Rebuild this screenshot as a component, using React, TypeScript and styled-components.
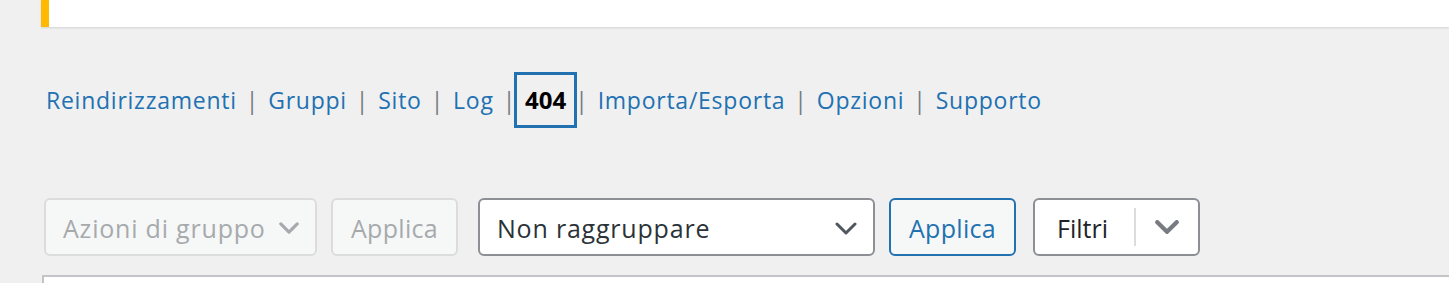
import React from 'react';
import styled, { createGlobalStyle } from 'styled-components';

const colors = {
  page: '#f0f0f1',
  blue: '#2271b1',
  text: '#1d2327',
  muted: '#a7aaad',
  sep: '#787c82',
  border: '#8c8f94',
  light: '#dcdcde',
  warning: '#ffb900',
};

const GlobalStyle = createGlobalStyle`
html, body {
  margin: 0;
  padding: 0;
  background: ${colors.page};
  font-family: "Open Sans", "Noto Sans", sans-serif;
  overflow: hidden;
}`;

const Wrap = styled.div`
padding-left: 42px;
width: 1449px;
box-sizing: border-box;`;

const Notice = styled.div`
height: 27px;
margin-left: -1px;
background: #fff;
border-left: 8px solid ${colors.warning};
box-shadow: 0 1px 2px rgba(0, 0, 0, 0.12);`;

const Nav = styled.ul`
list-style: none;
display: flex;
align-items: center;
margin: 51px 0 0;
padding: 0 0 0 4px;
height: 44px;
font-size: 23px;
letter-spacing: 0.75px;`;

const Item = styled.li`
display: flex;
align-items: center;
color: ${colors.sep};`;

const Link = styled.a`
color: ${colors.blue};
text-decoration: none;`;

const Current = styled.strong`
color: #000;
font-size: 24px;
font-weight: 700;
letter-spacing: 0;
line-height: 34px;
outline: 3px solid ${colors.blue};
outline-offset: 8px;`;

const Sep = styled.span`
padding: 0 9px;`;

const Toolbar = styled.div`
display: flex;
align-items: center;
margin-top: 76px;
margin-left: 2px;
font-size: 25px;
letter-spacing: 0.8px;`;

const Group = styled.div<{ $space: number }>`
display: flex;
gap: 14px;
margin-right: ${(p) => p.$space}px;`;

const Select = styled.div<{ $width: number; $disabled?: boolean }>`
box-sizing: border-box;
width: ${(p) => p.$width}px;
height: 58px;
display: flex;
align-items: center;
justify-content: space-between;
padding: 2px 16px 0 17px;
border-radius: 6px;
border: 2px solid ${(p) => (p.$disabled ? colors.light : colors.border)};
background: ${(p) => (p.$disabled ? '#f6f7f7' : '#fff')};
color: ${(p) => (p.$disabled ? colors.muted : '#2c3338')};`;

const Button = styled.div<{ $disabled?: boolean }>`
box-sizing: border-box;
width: 127px;
height: 58px;
display: flex;
align-items: center;
justify-content: center;
padding-top: 2px;
border-radius: 6px;
letter-spacing: 0.3px;
background: #f6f7f7;
border: 2px solid ${(p) => (p.$disabled ? colors.light : colors.blue)};
color: ${(p) => (p.$disabled ? colors.muted : colors.blue)};`;

const Split = styled.div`
box-sizing: border-box;
width: 167px;
height: 58px;
display: flex;
align-items: center;
border-radius: 6px;
border: 2px solid ${colors.border};
background: #fff;
letter-spacing: 0;
color: ${colors.text};`;

const SplitLabel = styled.span`
flex: 1;
padding: 2px 0 0 22px;`;

const SplitToggle = styled.span`
display: flex;
align-items: center;
justify-content: center;
width: 62px;
height: 38px;
border-left: 2px solid ${colors.light};`;

const Table = styled.div`
margin-top: 19px;
height: 6px;
background: #fff;
border: 2px solid #c3c4c7;
border-right: none;
border-bottom: none;`;

const Chevron = ({ color, width = 22, stroke = 3 }: { color: string; width?: number; stroke?: number }) => (
  <svg width={width} height={width / 2 + 2} viewBox="0 0 22 13" fill="none">
    <path d="M2 2 L11 11 L20 2" stroke={color} strokeWidth={stroke} strokeLinecap="round" strokeLinejoin="round" />
  </svg>
);

const items = [
  'Reindirizzamenti',
  'Gruppi',
  'Sito',
  'Log',
  '404',
  'Importa/Esporta',
  'Opzioni',
  'Supporto',
];

const App = () => (
  <>
    <GlobalStyle />
    <Wrap>
      <Notice />
      <Nav>
        {items.map((label, i) => (
          <Item key={label}>
            {label === '404' ? <Current>{label}</Current> : <Link href="#">{label}</Link>}
            {i < items.length - 1 ? <Sep>|</Sep> : null}
          </Item>
        ))}
      </Nav>
      <Toolbar>
        <Group $space={20}>
          <Select $width={273} $disabled>
            Azioni di gruppo
            <Chevron color="#a7aaad" width={20} stroke={3.5} />
          </Select>
          <Button $disabled>Applica</Button>
        </Group>
        <Group $space={17}>
          <Select $width={397}>
            Non raggruppare
            <Chevron color="#50575e" />
          </Select>
          <Button>Applica</Button>
        </Group>
        <Split>
          <SplitLabel>Filtri</SplitLabel>
          <SplitToggle>
            <Chevron color="#787c82" width={24} stroke={4} />
          </SplitToggle>
        </Split>
      </Toolbar>
      <Table />
    </Wrap>
  </>
);

export default App;
